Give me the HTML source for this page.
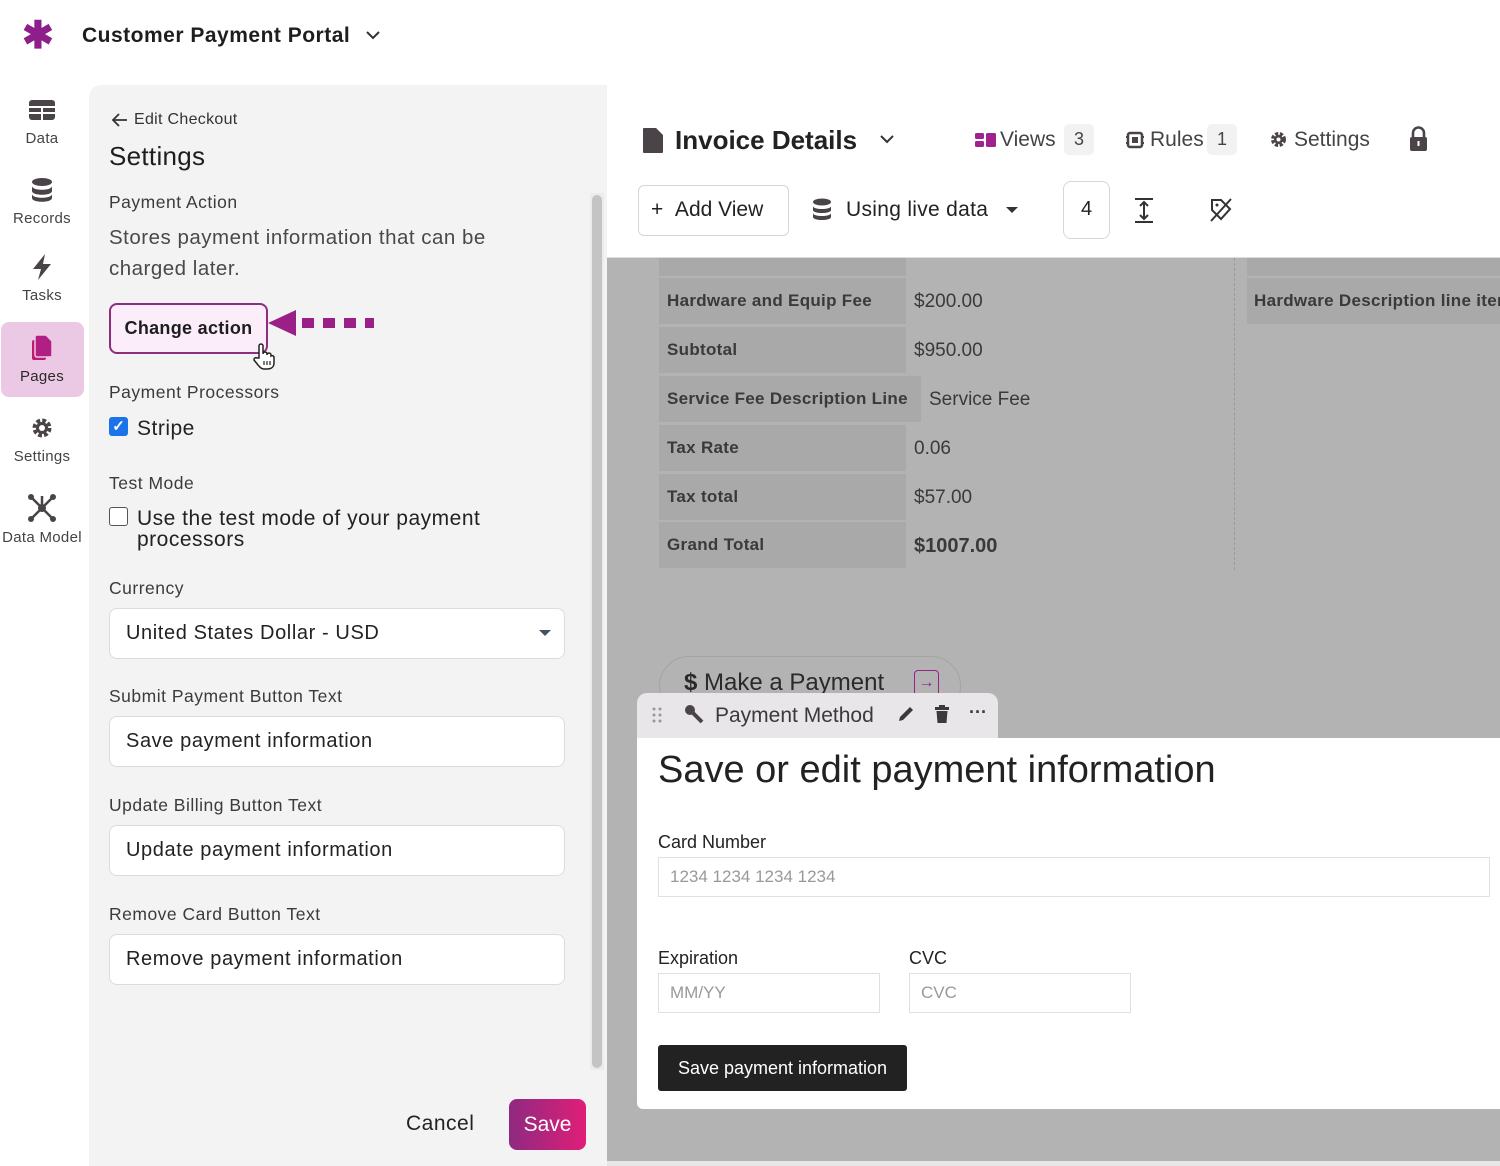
<!DOCTYPE html>
<html><head><meta charset="utf-8"><style>
*{margin:0;padding:0;box-sizing:border-box}
body{width:1500px;height:1166px;background:#fff;font-family:"Liberation Sans",sans-serif;color:#2a2a2a;position:relative;overflow:hidden}
.a{position:absolute}
.nav{position:absolute;left:0;width:84px;text-align:center;font-size:15px;color:#444;letter-spacing:.3px}
.lbl{position:absolute;left:109px;font-size:17.5px;color:#3c3a3c;letter-spacing:.5px}
.inp{position:absolute;left:109px;width:456px;height:51px;background:#fff;border:1.5px solid #dcdcdc;border-radius:8px;padding-left:16px;line-height:48px;font-size:20px;color:#222;letter-spacing:.6px}
.cell{position:absolute;left:659px;width:247px;height:46px;background:#a9a9a9;font-weight:bold;font-size:17px;color:#3a3a3a;padding-left:8px;line-height:46px;letter-spacing:.3px}
.val{position:absolute;left:914px;font-size:19px;color:#3a3a3a;line-height:46px}
.fi{position:absolute;border:1.5px solid #dde0e4;background:#fff;font-size:17px;color:#999;padding-left:11px;line-height:38px;height:40px}
</style></head><body>
<!-- top bar -->
<div class="a" style="left:22px;top:14px;font-size:38px;color:#8e1f8a;font-weight:bold;line-height:44px">✱</div>
<div class="a" style="left:82px;top:24px;font-size:21px;font-weight:bold;color:#1e1e1e;letter-spacing:.5px">Customer Payment Portal</div>
<svg class="a" style="left:365px;top:30px" width="16" height="12"><path d="M2 2l6 6 6-6" stroke="#333" stroke-width="2" fill="none"/></svg>

<!-- sidebar -->
<svg class="a" style="left:28px;top:99px" width="28" height="22"><rect x="1" y="1" width="26" height="20" rx="3" fill="#4a4448"/><path d="M1 8h26M1 14h26M14 8v13" stroke="#fff" stroke-width="2"/></svg>
<div class="nav" style="top:130px">Data</div>
<svg class="a" style="left:31px;top:177px" width="22" height="26"><ellipse cx="11" cy="5" rx="10" ry="4" fill="#4a4448"/><path d="M1 9c0 5 20 5 20 0v5c0 5-20 5-20 0zM1 17c0 5 20 5 20 0v4c0 5-20 5-20 0z" fill="#4a4448"/></svg>
<div class="nav" style="top:210px">Records</div>
<svg class="a" style="left:30px;top:253px" width="24" height="28"><path d="M15 1L3 16h8l-3 11 13-16h-8z" fill="#4a4448"/></svg>
<div class="nav" style="top:287px">Tasks</div>
<div class="a" style="left:1px;top:322px;width:83px;height:75px;background:#ebc9e4;border-radius:8px"></div>
<svg class="a" style="left:30px;top:334px" width="24" height="28"><rect x="2" y="6" width="14" height="20" rx="2" fill="#c3186f"/><path d="M7 1h9l6 6v14a2 2 0 0 1-2 2H7a2 2 0 0 1-2-2V3a2 2 0 0 1 2-2z" fill="#b21f82" stroke="#ebc9e4" stroke-width="1.5"/></svg>
<div class="nav" style="top:368px;color:#2a2a2a">Pages</div>
<svg class="a" style="left:30px;top:416px" width="24" height="24"><circle cx="12" cy="12" r="7" fill="none" stroke="#4a4448" stroke-width="5" stroke-dasharray="3.5 2"/><circle cx="12" cy="12" r="6" fill="#4a4448"/><circle cx="12" cy="12" r="3" fill="#fff"/></svg>
<div class="nav" style="top:448px">Settings</div>
<svg class="a" style="left:27px;top:493px" width="30" height="30"><path d="M4 4l22 22M26 4L4 26M15 15v-12" stroke="#4a4448" stroke-width="2.5"/><circle cx="15" cy="15" r="4" fill="#4a4448"/><circle cx="4" cy="4" r="3" fill="#4a4448"/><circle cx="26" cy="4" r="3" fill="#4a4448"/><circle cx="4" cy="26" r="3" fill="#4a4448"/><circle cx="26" cy="26" r="3" fill="#4a4448"/></svg>
<div class="nav" style="top:529px;left:-2px;width:88px">Data Model</div>

<!-- settings panel -->
<div class="a" style="left:89px;top:85px;width:518px;height:1081px;background:#f3f3f3;border-top-left-radius:12px"></div>
<div class="a" style="left:590px;top:193px;width:14px;height:877px;background:#ececec"></div>
<div class="a" style="left:592px;top:195px;width:10px;height:873px;background:#c4c4c4;border-radius:5px"></div>
<svg class="a" style="left:111px;top:112px" width="18" height="16"><path d="M16 8H3M8 2L2 8l6 6" stroke="#333" stroke-width="1.8" fill="none"/></svg>
<div class="a" style="left:134px;top:111px;font-size:16px;color:#333;letter-spacing:.3px">Edit Checkout</div>
<div class="a" style="left:109px;top:141px;font-size:26px;color:#1e1e1e;letter-spacing:.3px">Settings</div>
<div class="lbl" style="top:192px">Payment Action</div>
<div class="a" style="left:109px;top:222px;font-size:20.5px;color:#4a484a;line-height:31px;width:440px;letter-spacing:.5px">Stores payment information that can be charged later.</div>
<div class="a" style="left:109px;top:303px;width:159px;height:51px;background:#fbeefa;border:2px solid #8e2d7e;border-radius:8px;font-size:18px;font-weight:bold;line-height:47px;text-align:center;color:#1e1e1e;letter-spacing:.3px">Change action</div>
<svg class="a" style="left:266px;top:306px" width="112" height="36"><path d="M2 17L30 4v26z" fill="#9a2088"/><path d="M36 17h72" stroke="#9a2088" stroke-width="10" stroke-dasharray="12 9"/></svg>
<svg class="a" style="left:252px;top:342px" width="24" height="28"><path d="M7 16V4a2 2 0 0 1 4 0v8a2 2 0 0 1 4 0v1a2 2 0 0 1 4 0v1a2 2 0 0 1 3 1v6c0 4-3 6-7 6h-3c-3 0-4-2-6-4l-4-5a2 2 0 0 1 3-2z" fill="#fff" stroke="#222" stroke-width="1.5"/><path d="M12 19v4M15 19v4M18 19v4" stroke="#222" stroke-width="1.2"/></svg>
<div class="lbl" style="top:382px">Payment Processors</div>
<div class="a" style="left:109px;top:417px;width:19px;height:19px;background:#1a73e8;border-radius:3px;color:#fff;font-size:15px;text-align:center;line-height:19px;font-weight:bold">✓</div>
<div class="a" style="left:137px;top:417px;font-size:21px;color:#222;letter-spacing:.5px">Stripe</div>
<div class="lbl" style="top:473px">Test Mode</div>
<div class="a" style="left:109px;top:507px;width:19px;height:19px;border:1.5px solid #555;border-radius:3px;background:#fff"></div>
<div class="a" style="left:137px;top:508px;font-size:21px;color:#222;line-height:21px;width:400px;letter-spacing:.5px">Use the test mode of your payment<br>processors</div>
<div class="lbl" style="top:578px">Currency</div>
<div class="inp" style="top:608px">United States Dollar - USD</div>
<svg class="a" style="left:538px;top:628px" width="14" height="10"><path d="M1 2h12L7 8z" fill="#45525f"/></svg>
<div class="lbl" style="top:686px">Submit Payment Button Text</div>
<div class="inp" style="top:716px">Save payment information</div>
<div class="lbl" style="top:795px">Update Billing Button Text</div>
<div class="inp" style="top:825px">Update payment information</div>
<div class="lbl" style="top:904px">Remove Card Button Text</div>
<div class="inp" style="top:934px">Remove payment information</div>
<div class="a" style="left:406px;top:1112px;font-size:21px;color:#222;letter-spacing:.5px">Cancel</div>
<div class="a" style="left:509px;top:1099px;width:77px;height:51px;border-radius:8px;background:linear-gradient(90deg,#8e2a80,#e01e78);color:#fff;font-size:21px;text-align:center;line-height:51px">Save</div>

<!-- right header -->
<div class="a" style="left:607px;top:85px;width:893px;height:173px;background:#fff;border-bottom:1px solid #ddd"></div>
<svg class="a" style="left:642px;top:127px" width="22" height="27"><path d="M2 1h12l7 7v17a1 1 0 0 1-1 1H2a1 1 0 0 1-1-1V2a1 1 0 0 1 1-1z" fill="#4a4448"/></svg>
<div class="a" style="left:675px;top:125px;font-size:26px;font-weight:bold;color:#222">Invoice Details</div>
<svg class="a" style="left:879px;top:134px" width="16" height="12"><path d="M2 2l6 6 6-6" stroke="#333" stroke-width="2" fill="none"/></svg>
<svg class="a" style="left:975px;top:132px" width="22" height="16"><rect x="0" y="1" width="9" height="6" rx="1.5" fill="#a0228f"/><rect x="0" y="9" width="9" height="6" rx="1.5" fill="#a0228f"/><rect x="11" y="1" width="10" height="14" rx="1.5" fill="#a0228f"/></svg>
<div class="a" style="left:1000px;top:128px;font-size:21px;color:#444">Views</div>
<div class="a" style="left:1064px;top:124px;width:30px;height:31px;background:#f2f2f2;border-radius:5px;text-align:center;line-height:31px;font-size:18px;color:#444">3</div>
<svg class="a" style="left:1125px;top:130px" width="20" height="20"><rect x="3" y="3" width="14" height="14" rx="2" fill="none" stroke="#4a4448" stroke-width="2.5"/><rect x="7" y="7" width="6" height="6" fill="#4a4448"/><path d="M1 7h2M1 13h2M17 7h2M17 13h2" stroke="#4a4448" stroke-width="2"/></svg>
<div class="a" style="left:1150px;top:128px;font-size:21px;color:#444">Rules</div>
<div class="a" style="left:1207px;top:124px;width:30px;height:31px;background:#f2f2f2;border-radius:5px;text-align:center;line-height:31px;font-size:18px;color:#444">1</div>
<svg class="a" style="left:1270px;top:131px" width="17" height="17"><circle cx="8.5" cy="8.5" r="5.5" fill="none" stroke="#4a4448" stroke-width="4" stroke-dasharray="3 1.5"/><circle cx="8.5" cy="8.5" r="4.5" fill="#4a4448"/><circle cx="8.5" cy="8.5" r="2" fill="#fff"/></svg>
<div class="a" style="left:1294px;top:128px;font-size:21px;color:#444">Settings</div>
<svg class="a" style="left:1409px;top:126px" width="19" height="26"><path d="M4 11V7a5.5 5.5 0 0 1 11 0v4" stroke="#4a4448" stroke-width="2.6" fill="none"/><rect x="1" y="11" width="17" height="14" rx="2" fill="#4a4448"/><rect x="8.5" y="15" width="2" height="5" fill="#fff"/></svg>
<div class="a" style="left:638px;top:185px;width:151px;height:51px;border:1.5px solid #d6d6d6;border-radius:6px;font-size:21px;color:#222;line-height:48px;padding-left:12px">+&nbsp;&nbsp;Add View</div>
<svg class="a" style="left:812px;top:198px" width="20" height="24"><ellipse cx="10" cy="4" rx="9" ry="3.5" fill="#4a4448"/><path d="M1 8c0 4 18 4 18 0v4c0 4-18 4-18 0zM1 15c0 4 18 4 18 0v4c0 4-18 4-18 0z" fill="#4a4448"/></svg>
<div class="a" style="left:846px;top:198px;font-size:21px;color:#222;letter-spacing:.3px">Using live data</div>
<svg class="a" style="left:1006px;top:206px" width="12" height="8"><path d="M0 1h12L6 7z" fill="#333"/></svg>
<div class="a" style="left:1063px;top:181px;width:47px;height:58px;border:1.5px solid #d6d6d6;border-radius:8px;text-align:center;line-height:54px;font-size:20px;color:#222">4</div>
<svg class="a" style="left:1133px;top:197px" width="22" height="28"><path d="M2 2h18M2 25h18M11 5v17M7 9l4-4 4 4M7 18l4 4 4-4" stroke="#333" stroke-width="2" fill="none"/></svg>
<svg class="a" style="left:1208px;top:196px" width="26" height="28"><path d="M4 4h9l9 9-9 10-9-9z" stroke="#333" stroke-width="2" fill="none"/><circle cx="9" cy="9" r="1.5" fill="#333"/><path d="M3 25L23 3" stroke="#333" stroke-width="2"/></svg>

<!-- gray canvas -->
<div class="a" style="left:607px;top:258px;width:893px;height:903px;background:#b3b3b3"></div>
<div class="a" style="left:607px;top:1161px;width:893px;height:5px;background:#e6e6e6"></div>
<div class="cell" style="top:258px;height:18px"></div>
<div class="a" style="left:1247px;top:258px;width:253px;height:18px;background:#a9a9a9"></div>
<div class="a" style="left:1234px;top:258px;height:312px;border-left:1px dashed #999"></div>
<div class="cell" style="top:278px">Hardware and Equip Fee</div><div class="val" style="top:279px">$200.00</div>
<div class="a" style="left:1247px;top:278px;width:253px;height:46px;background:#a9a9a9;font-weight:bold;font-size:17px;color:#3a3a3a;padding-left:7px;line-height:46px;white-space:nowrap;overflow:hidden;letter-spacing:.3px">Hardware Description line item</div>
<div class="cell" style="top:327px">Subtotal</div><div class="val" style="top:328px">$950.00</div>
<div class="cell" style="top:376px;width:262px">Service Fee Description Line</div><div class="val" style="top:377px;left:929px">Service Fee</div>
<div class="cell" style="top:425px">Tax Rate</div><div class="val" style="top:426px">0.06</div>
<div class="cell" style="top:474px">Tax total</div><div class="val" style="top:475px">$57.00</div>
<div class="cell" style="top:522px">Grand Total</div><div class="val" style="top:523px;font-weight:bold;font-size:20px">$1007.00</div>

<div class="a" style="left:659px;top:656px;width:302px;height:60px;border:1.5px solid #a4a4a4;border-radius:30px"></div>
<div class="a" style="left:684px;top:669px;font-size:24px;color:#2a2a2a"><b>$</b> Make a Payment</div>
<div class="a" style="left:914px;top:670px;width:25px;height:26px;border:1.5px solid #9a2088;border-radius:4px;color:#9a2088;font-size:16px;text-align:center;line-height:23px">→</div>
<div class="a" style="left:637px;top:693px;width:361px;height:46px;background:#e8e6e8;border-radius:10px 10px 0 0"></div>
<svg class="a" style="left:651px;top:707px" width="12" height="18"><g fill="#999"><circle cx="3" cy="2" r="1.5"/><circle cx="9" cy="2" r="1.5"/><circle cx="3" cy="8" r="1.5"/><circle cx="9" cy="8" r="1.5"/><circle cx="3" cy="14" r="1.5"/><circle cx="9" cy="14" r="1.5"/></g></svg>
<svg class="a" style="left:684px;top:704px" width="20" height="20"><circle cx="6" cy="6" r="5" fill="#4a4448"/><path d="M7 7l11 11" stroke="#4a4448" stroke-width="4"/></svg>
<div class="a" style="left:715px;top:704px;font-size:21px;color:#3a3a3a">Payment Method</div>
<svg class="a" style="left:897px;top:705px" width="18" height="18"><path d="M2 16l1-4 10-10 3 3-10 10z" fill="#3a3a3a"/></svg>
<svg class="a" style="left:935px;top:705px" width="14" height="18"><rect x="0" y="2" width="14" height="3" fill="#3a3a3a"/><rect x="4" y="0" width="6" height="3" fill="#3a3a3a"/><path d="M1.5 6h11l-1 12h-9z" fill="#3a3a3a"/></svg>
<div class="a" style="left:969px;top:702px;font-size:18px;color:#3a3a3a;font-weight:bold">···</div>
<div class="a" style="left:637px;top:738px;width:863px;height:371px;background:#fff;border-bottom-left-radius:6px"></div>
<div class="a" style="left:658px;top:749px;font-size:38px;color:#222">Save or edit payment information</div>
<div class="a" style="left:658px;top:832px;font-size:18px;color:#222">Card Number</div>
<div class="fi" style="left:658px;top:857px;width:832px">1234 1234 1234 1234</div>
<div class="a" style="left:658px;top:948px;font-size:18px;color:#222">Expiration</div>
<div class="a" style="left:909px;top:948px;font-size:18px;color:#222">CVC</div>
<div class="fi" style="left:658px;top:973px;width:222px">MM/YY</div>
<div class="fi" style="left:909px;top:973px;width:222px">CVC</div>
<div class="a" style="left:658px;top:1045px;width:249px;height:46px;background:#222;border-radius:3px;color:#fff;font-size:18px;text-align:center;line-height:46px">Save payment information</div>
</body></html>
